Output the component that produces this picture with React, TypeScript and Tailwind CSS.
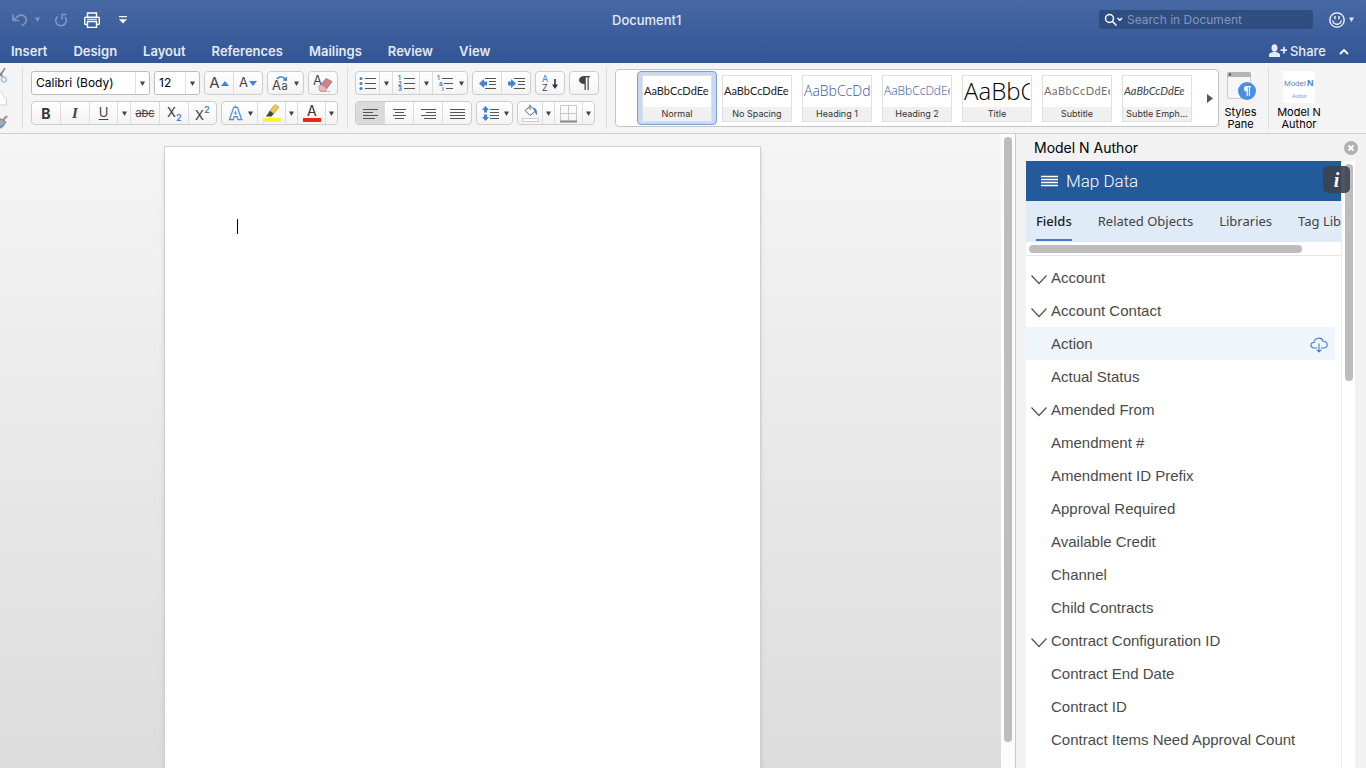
import { ReactNode } from 'react';

const fields = [
    { name: 'Account', group: true },
    { name: 'Account Contact', group: true },
    { name: 'Action', active: true },
    { name: 'Actual Status' },
    { name: 'Amended From', group: true },
    { name: 'Amendment #' },
    { name: 'Amendment ID Prefix' },
    { name: 'Approval Required' },
    { name: 'Available Credit' },
    { name: 'Channel' },
    { name: 'Child Contracts' },
    { name: 'Contract Configuration ID', group: true },
    { name: 'Contract End Date' },
    { name: 'Contract ID' },
    { name: 'Contract Items Need Approval Count' },
    { name: 'Contract Name' },
];

const styles = [
    { name: 'Normal', sample: "font-['Lato',sans-serif] text-[11px] text-[#222]", selected: true },
    { name: 'No Spacing', sample: "font-['Lato',sans-serif] text-[11px] text-[#222]" },
    { name: 'Heading 1', sample: "font-['Open_Sans',sans-serif] text-[14px] font-light text-[#2f5597]" },
    { name: 'Heading 2', sample: "font-['Open_Sans',sans-serif] text-[12px] font-light text-[#2f5597]" },
    { name: 'Title', sample: "font-['Open_Sans',sans-serif] text-[24px] font-light text-black" },
    { name: 'Subtitle', sample: "font-['Lato',sans-serif] text-[11px] tracking-wider text-[#707070]" },
    { name: 'Subtle Emph...', sample: "font-['Lato',sans-serif] text-[11px] text-[#404040] italic" },
];

const menuTabs = ['Insert', 'Design', 'Layout', 'References', 'Mailings', 'Review', 'View'];

const Caret = () => (
    <svg width="5" height="5" viewBox="0 0 5 5" className="shrink-0" fill="currentColor">
        <path d="M0 0.5h5L2.5 5z" />
    </svg>
);

const Group = ({ children }: { children: ReactNode }) => (
    <div className="flex h-6 shrink-0 overflow-hidden rounded-[4px] border border-[#cdcdcd] bg-linear-to-b from-white to-[#f3f3f3] text-[#444]">
        {children}
    </div>
);

const Tool = ({ label, className, children }: { label: string; className: string; children: ReactNode }) => (
    <button
        type="button"
        aria-label={label}
        className={`flex h-full shrink-0 items-center justify-center border-[#dcdcdc] not-last:border-r ${className}`}
    >
        {children}
    </button>
);

const Lines = ({ rows, x = 0 }: { rows: number[][]; x?: number }) => (
    <g stroke="#555" strokeWidth="1">
        {rows.map(([start, end], i) => (
            <path key={i} d={`M${start + x} ${i * 3 + 3.5}H${end + x}`} />
        ))}
    </g>
);

const AlignIcon = ({ rows }: { rows: number[][] }) => (
    <svg width="15" height="15" viewBox="0 0 15 15">
        <Lines rows={rows} />
    </svg>
);

const Divider = () => <div className="-mt-1 h-[62px] w-px shrink-0 bg-[#dcdcdc]" />;

const Header = () => (
    <header className="flex h-[63px] shrink-0 flex-col bg-linear-to-b from-[#4768a4] to-[#325594] text-[#e4eaf4]">
        <div className="grid h-[39px] grid-cols-[612fr_487fr_267px] items-center">
            <div className="flex items-center pl-3">
                <button type="button" aria-label="Undo" className="text-[#7f98c3]">
                    <svg width="16" height="14" viewBox="0 0 16 14" fill="none" stroke="currentColor" strokeWidth="1.6">
                        <path d="M1.500 7L6 3.200C10 .8 14.500 3 14.300 7c-.2 2.500-2 4.500-4.800 5.500M1 1.500v6h6" />
                    </svg>
                </button>
                <button type="button" aria-label="Undo list" className="ml-[7px] text-[#7f98c3]"><Caret /></button>
                <button type="button" aria-label="Redo" className="ml-[14px] text-[#7f98c3]">
                    <svg width="14" height="14" viewBox="0 0 14 14" fill="none" stroke="currentColor" strokeWidth="1.6">
                        <path d="M3.500 3.500A5.300 5.300 0 1 0 11 4M7.500 1.500H12.500M8 1.500v5" />
                    </svg>
                </button>
                <button type="button" aria-label="Print" className="ml-4">
                    <svg width="16" height="16" viewBox="0 0 16 16" fill="none" stroke="#fff" strokeWidth="1.400">
                        <path d="M3.500 5V1h9v4M3.500 12.500H1.700a1 1 0 0 1-1-1V6.200a1 1 0 0 1 1-1h12.600a1 1 0 0 1 1 1v5.300a1 1 0 0 1-1 1h-1.800M3.500 9.500h9v6h-9z" />
                        <path d="M3 7.300h10" strokeWidth="1" />
                    </svg>
                </button>
                <button type="button" aria-label="Customize toolbar" className="ml-[19px]">
                    <svg width="8" height="8" viewBox="0 0 8 8" fill="#fff">
                        <path d="M0 0h8v1.200H0zM0 3.200h8L4 7.500z" />
                    </svg>
                </button>
            </div>
            <h1 className="pt-0.5 text-[13px] font-medium">Document1</h1>
            <div className="flex items-center">
                <label className="flex h-[19px] w-[214px] items-center rounded-[3px] bg-[#304d80] pl-[5px]">
                    <svg width="19" height="14" viewBox="0 0 19 14" fill="none" stroke="#fff" strokeWidth="1.500">
                        <circle cx="5.500" cy="5.500" r="4" />
                        <path d="M8.500 8.500l4 4M13.500 5l2.300 2.200L18 5" />
                    </svg>
                    <input
                        type="text"
                        aria-label="Search in Document"
                        placeholder="Search in Document"
                        className="ml-1 w-44 bg-transparent text-[12px] leading-4 outline-none placeholder:text-[#8197bf]"
                    />
                </label>
                <button type="button" aria-label="Feedback" className="ml-4 flex items-center gap-1">
                    <svg width="16" height="16" viewBox="0 0 16 16" fill="none" stroke="#fff" strokeWidth="1.300">
                        <circle cx="8" cy="8" r="7.200" />
                        <path d="M6 4v3.200M10 4v3.200M3.800 8.500c.7 5 7.700 5 8.400 0" />
                    </svg>
                    <Caret />
                </button>
            </div>
        </div>
        <div className="flex h-6 items-center">
            <nav className="flex gap-[26px] pl-[11px]">
                {menuTabs.map((tab) => (
                    <button key={tab} type="button" className="text-[13px] leading-5 font-semibold">{tab}</button>
                ))}
            </nav>
            <button type="button" className="ml-auto flex items-center gap-[3px] text-[13px] leading-5 font-medium">
                <svg width="18" height="14" viewBox="0 0 18 14" fill="currentColor">
                    <ellipse cx="5.500" cy="4" rx="3" ry="3.700" />
                    <path d="M0 13V10.500C.5 8.800 3 8.500 4 8h3c1 .5 3.500.8 4 2.500V13zM11.500 5.200H14V2.700h1.800v2.500H18v1.800h-2.200v2.500H14V7h-2.500z" />
                </svg>
                Share
            </button>
            <button type="button" aria-label="Collapse ribbon" className="mr-[17px] ml-[13px]">
                <svg width="10" height="7" viewBox="0 0 10 7" fill="none" stroke="#fff" strokeWidth="1.800">
                    <path d="M1 6l4-4 4 4" />
                </svg>
            </button>
        </div>
    </header>
);

const FontGroup = () => (
    <div className="flex flex-col gap-[6px] pr-[9px] pl-2">
        <div className="flex gap-1">
            <div className="relative flex">
                <select aria-label="Font" className="h-6 w-[119px] appearance-none rounded-[3px] border border-[#bdbdbd] bg-white pl-1 text-[12px] text-black">
                    <option>Calibri (Body)</option>
                </select>
                <span className="pointer-events-none absolute inset-y-px right-px flex w-[14px] items-center justify-center border-l border-[#e0e0e0] text-[#444]"><Caret /></span>
            </div>
            <div className="relative flex">
                <select aria-label="Font size" className="h-6 w-[46px] appearance-none rounded-[3px] border border-[#bdbdbd] bg-white pl-1 text-[12px] text-black">
                    <option>12</option>
                </select>
                <span className="pointer-events-none absolute inset-y-px right-px flex w-[14px] items-center justify-center border-l border-[#e0e0e0] text-[#444]"><Caret /></span>
            </div>
            <Group>
                <Tool label="Increase font size" className="w-[29px] gap-px text-[15px]">
                    A
                    <svg width="8" height="5" viewBox="0 0 8 5" fill="#3f83d6"><path d="M0 5L4 0l4 5z" /></svg>
                </Tool>
                <Tool label="Decrease font size" className="w-7 gap-px text-[13px]">
                    A
                    <svg width="8" height="5" viewBox="0 0 8 5" fill="#3f83d6"><path d="M0 0h8L4 5z" /></svg>
                </Tool>
            </Group>
            <Group>
                <Tool label="Change case" className="w-[35px] gap-[5px]">
                    <svg width="17" height="17" viewBox="0 0 17 17">
                        <text x="0" y="15" fontSize="13" fill="#444">A</text>
                        <text x="9.500" y="15" fontSize="11" fill="#444">a</text>
                        <path d="M5 4c2-3 6-3 8 0" fill="none" stroke="#3f83d6" strokeWidth="1.700" />
                        <path d="M10.500 5.500l4.500.5V1.500z" fill="#3f83d6" />
                    </svg>
                    <Caret />
                </Tool>
            </Group>
            <Group>
                <Tool label="Clear formatting" className="w-7">
                    <svg width="22" height="20" viewBox="0 0 22 20">
                        <text x="1" y="12" fontSize="13" fill="#444">A</text>
                        <path d="M8 18.500h10" stroke="#bbb" />
                        <path d="M7 13.500L14 5.500l6 3-7 9.500-5.500-.5z" fill="#cf8290" stroke="#a8636f" strokeWidth=".8" />
                        <path d="M7 13.500l1.500-1.700 6 3.500L13 18l-5.500-.5z" fill="#e8b6bd" />
                    </svg>
                </Tool>
            </Group>
        </div>
        <div className="flex gap-1">
            <Group>
                <Tool label="Bold" className="w-[29px] text-[14px] font-bold text-[#333]">B</Tool>
                <Tool label="Italic" className="w-[29px] font-['Liberation_Serif',serif] text-[15px] font-bold italic">I</Tool>
                <Tool label="Underline" className="w-7 text-[13px] underline underline-offset-2">U</Tool>
                <Tool label="Underline style" className="w-[13px]"><Caret /></Tool>
                <Tool label="Strikethrough" className="w-[29px] text-[11px] line-through">abc</Tool>
                <Tool label="Subscript" className="w-[29px]">
                    <svg width="17" height="17" viewBox="0 0 17 17">
                        <text x="1" y="12" fontSize="13" fill="#333">X</text>
                        <text x="10" y="16" fontSize="9" fontWeight="600" fill="#3f83d6">2</text>
                    </svg>
                </Tool>
                <Tool label="Superscript" className="w-[27px]">
                    <svg width="17" height="17" viewBox="0 0 17 17">
                        <text x="1" y="15" fontSize="13" fill="#333">X</text>
                        <text x="10" y="8" fontSize="9" fontWeight="600" fill="#3f83d6">2</text>
                    </svg>
                </Tool>
            </Group>
            <Group>
                <Tool label="Text effects" className="w-9 gap-[5px]">
                    <svg width="16" height="17" viewBox="0 0 16 17">
                        <text x="3" y="14" fontSize="15" fontWeight="600" fill="#fff" stroke="#4a8adb" strokeWidth="2.600" paintOrder="stroke">A</text>
                    </svg>
                    <Caret />
                </Tool>
                <Tool label="Highlight" className="w-7">
                    <svg width="20" height="20" viewBox="0 0 20 20">
                        <rect x="1" y="15" width="18" height="4" fill="#fbf235" />
                        <path d="M4 13.500L8 7.500l4 3-2.500 3z" fill="#444" />
                        <path d="M8 7.500L13 1.500l4 2.500-5 6.500z" fill="#ecc85b" stroke="#b99a45" strokeWidth=".7" />
                    </svg>
                </Tool>
                <Tool label="Highlight color" className="w-3"><Caret /></Tool>
                <Tool label="Font color" className="w-7">
                    <svg width="20" height="20" viewBox="0 0 20 20">
                        <text x="5" y="13" fontSize="14" fill="#333">A</text>
                        <rect x="1" y="15" width="18" height="4" fill="#e8261a" />
                    </svg>
                </Tool>
                <Tool label="Font color list" className="w-[11px]"><Caret /></Tool>
            </Group>
        </div>
    </div>
);

const ParagraphGroup = () => (
    <div className="flex flex-col gap-[6px] px-[7px]">
        <div className="flex gap-1">
            <Group>
                <Tool label="Bullets" className="w-6">
                    <svg width="17" height="17" viewBox="0 0 17 17">
                        <g fill="#3f83d6"><circle cx="2" cy="3.500" r="1.500" /><circle cx="2" cy="8.500" r="1.500" /><circle cx="2" cy="13.500" r="1.500" /></g>
                        <path d="M6 3.500h11M6 8.500h11M6 13.500h11" stroke="#555" />
                    </svg>
                </Tool>
                <Tool label="Bullet list" className="w-[13px]"><Caret /></Tool>
                <Tool label="Numbering" className="w-[27px]">
                    <svg width="17" height="17" viewBox="0 0 17 17">
                        <g fill="#3f83d6" fontSize="6" fontWeight="700"><text x="0" y="5">1</text><text x="0" y="11">2</text><text x="0" y="16">3</text></g>
                        <path d="M6 3.500h11M6 8.500h11M6 13.500h11" stroke="#555" />
                    </svg>
                </Tool>
                <Tool label="Number list" className="w-[13px]"><Caret /></Tool>
                <Tool label="Multilevel list" className="w-[34px] gap-[5px]">
                    <svg width="18" height="17" viewBox="0 0 18 17">
                        <g fill="#3f83d6" fontSize="6" fontWeight="700"><text x="1" y="5">1</text><text x="3" y="11">a</text><text x="6" y="16">i</text></g>
                        <path d="M6 3.500h11M8 8.500h9M10 13.500h7" stroke="#555" />
                    </svg>
                    <Caret />
                </Tool>
            </Group>
            <Group>
                <Tool label="Decrease indent" className="w-[29px]">
                    <svg width="18" height="15" viewBox="0 0 18 15">
                        <path d="M1 7.500L6 3v2.500h3v4H6V12z" fill="#3f83d6" />
                        <path d="M7 2.500h11M11 5.500h7M11 8.500h7M7 12.500h11" stroke="#555" />
                    </svg>
                </Tool>
                <Tool label="Increase indent" className="w-7">
                    <svg width="18" height="15" viewBox="0 0 18 15">
                        <path d="M9 7.500L4 3v2.500H1v4h3V12z" fill="#3f83d6" />
                        <path d="M7 2.500h11M11 5.500h7M11 8.500h7M7 12.500h11" stroke="#555" />
                    </svg>
                </Tool>
            </Group>
            <Group>
                <Tool label="Sort" className="w-7">
                    <svg width="18" height="20" viewBox="0 0 18 20">
                        <text x="1" y="9" fontSize="9" fill="#3f83d6">A</text>
                        <text x="1" y="18" fontSize="9" fill="#444">Z</text>
                        <path d="M14 6v8" stroke="#333" strokeWidth="1.600" />
                        <path d="M11 11.500h6L14 16z" fill="#333" />
                    </svg>
                </Tool>
            </Group>
            <Group>
                <Tool label="Show marks" className="w-7">
                    <svg width="13" height="14" viewBox="0 0 13 14">
                        <path d="M6.500 0H12v1.200h-1.300V14H9.500V1.200H7.800V14H6.500V8C-.8 8-.8 0 6.500 0z" fill="#444" />
                    </svg>
                </Tool>
            </Group>
        </div>
        <div className="flex gap-1">
            <Group>
                <Tool label="Align left" className="w-[29px] bg-[#dadada]"><AlignIcon rows={[[0, 15], [0, 10], [0, 15], [0, 12]]} /></Tool>
                <Tool label="Center" className="w-[29px]"><AlignIcon rows={[[1, 14], [3, 12], [1, 14], [3, 12]]} /></Tool>
                <Tool label="Align right" className="w-[29px]"><AlignIcon rows={[[0, 15], [5, 15], [0, 15], [3, 15]]} /></Tool>
                <Tool label="Justify" className="w-7"><AlignIcon rows={[[0, 15], [0, 15], [0, 15], [0, 15]]} /></Tool>
            </Group>
            <Group>
                <Tool label="Line spacing" className="w-[35px] gap-1">
                    <svg width="19" height="15" viewBox="0 0 19 15">
                        <path d="M4.500 0L8 4H6v2.500H3V4H1zM4.500 15L8 11H6V8.500H3V11H1z" fill="#3f83d6" />
                        <Lines rows={[[9, 18], [9, 18], [9, 18], [9, 18]]} />
                    </svg>
                    <Caret />
                </Tool>
            </Group>
            <Group>
                <Tool label="Shading" className="w-[25px]">
                    <svg width="19" height="20" viewBox="0 0 19 20">
                        <rect x="1.500" y="15.500" width="16" height="3" fill="#fff" stroke="#ccc" />
                        <path d="M4 7.500L9.500 3l5 5L9 12.500z" fill="#fff" stroke="#666" />
                        <path d="M9 7V1.500" stroke="#666" />
                        <path d="M12 4.500c3 .5 4.500 3 4 7.500-2-1-2-3-2.500-4.500z" fill="#3f83d6" />
                    </svg>
                </Tool>
                <Tool label="Shading color" className="w-3"><Caret /></Tool>
                <Tool label="Borders" className="w-7">
                    <svg width="19" height="19" viewBox="0 0 19 19" fill="none" stroke="#c8c8c8">
                        <path d="M1.500 1.500h16v16h-16zM9.500 1.500v16M1.500 9.500h16" />
                        <path d="M1 17.500h17" stroke="#888" strokeWidth="2" />
                    </svg>
                </Tool>
                <Tool label="Border list" className="w-[11px]"><Caret /></Tool>
            </Group>
        </div>
    </div>
);

const StyleGallery = () => (
    <div className="-mt-0.5 ml-2 flex h-[58px] shrink-0 items-center rounded-[4px] border border-[#c4c4c4] bg-white pl-[21px]">
        {styles.map((style) => (
            <button
                key={style.name}
                type="button"
                className={`flex h-[54px] w-20 items-center justify-center rounded-[4px] border ${style.selected ? 'border-[#7d9fd3] bg-[#c9d8ee]' : 'border-transparent'}`}
            >
                <span className="flex h-[47px] w-[70px] flex-col border border-[#e0e0e0] bg-white">
                    <span className="flex h-[31px] items-center px-px">
                        <span className={`overflow-hidden leading-7 whitespace-nowrap ${style.sample}`}>AaBbCcDdEe</span>
                    </span>
                    <span className="h-[14px] bg-[#f0f0f0] text-center text-[9px] leading-[14px] whitespace-nowrap text-[#333]">{style.name}</span>
                </span>
            </button>
        ))}
        <button type="button" aria-label="More styles" className="flex w-[21px] justify-center pl-1 text-[#555]">
            <svg width="6" height="9" viewBox="0 0 6 9" fill="currentColor"><path d="M0 0l6 4.500L0 9z" /></svg>
        </button>
    </div>
);

const Ribbon = () => (
    <div className="flex h-[71px] shrink-0 overflow-hidden border-b border-[#cfcfcf] bg-[#f4f4f4] pt-2 text-black">
        <div className="-mt-2 flex w-[22px] shrink-0 flex-col items-start gap-2 pt-1">
            <button type="button" aria-label="Cut">
                <svg width="8" height="16" viewBox="0 0 8 16" fill="none">
                    <path d="M5 1L0 9M0 6l3 4" stroke="#888" strokeWidth="1.600" />
                    <circle cx="3.800" cy="12.500" r="2.500" stroke="#9fc3ea" strokeWidth="1.400" />
                </svg>
            </button>
            <button type="button" aria-label="Copy">
                <svg width="8" height="16" viewBox="0 0 8 16" fill="#fff" stroke="#d0d0d0">
                    <path d="M-4 .5h5l2 2v3h1l2.500 2.500v6H-2" />
                </svg>
            </button>
            <button type="button" aria-label="Format painter">
                <svg width="8" height="16" viewBox="0 0 8 16" fill="none">
                    <path d="M7 1L3 5" stroke="#999" strokeWidth="2.400" />
                    <path d="M-1 3l7 4-3 4-4 1z" fill="#aaa" stroke="#777" />
                    <path d="M0 13l4-3" stroke="#5a94d8" strokeWidth="1.600" />
                </svg>
            </button>
        </div>
        <Divider />
        <FontGroup />
        <Divider />
        <ParagraphGroup />
        <Divider />
        <StyleGallery />
        <button type="button" className="flex w-[43px] shrink-0 flex-col items-center text-[11px] leading-3">
            <svg width="30" height="32" viewBox="0 0 30 32" className="mb-[3px]">
                <rect x="1.500" y="1.500" width="23" height="26" rx="1.500" fill="#f7f7f7" stroke="#ccc" />
                <path d="M1 3a2 2 0 0 1 2-2h20a2 2 0 0 1 2 2v3H1z" fill="#b4b4b4" />
                <circle cx="4" cy="3.500" r="1.200" fill="#555" />
                <circle cx="21" cy="20" r="9" fill="#4a8fe2" />
                <path d="M20.500 15H25v1.200h-1V25h-1.200v-8.800h-1V25h-1.200v-4.500c-3.500 0-3.500-5.500-.1-5.500z" fill="#fff" />
            </svg>
            Styles<br />Pane
        </button>
        <div className="ml-1.5"><Divider /></div>
        <button type="button" className="flex w-[60px] shrink-0 flex-col items-center text-[11px] leading-3">
            <svg width="32" height="32" viewBox="0 0 32 32" className="mb-[3px]" fontFamily="'Liberation Sans', sans-serif">
                <rect width="32" height="32" fill="#fff" />
                <text x="1" y="15" fontSize="8" fill="#5f7fb5">Model</text>
                <text x="24" y="15" fontSize="9" fontWeight="700" fill="#3f83d6">N</text>
                <text x="9" y="27" fontSize="5" fill="#6d9edb">Author</text>
            </svg>
            Model N<br />Author
        </button>
    </div>
);

const DocumentArea = () => (
    <main className="flex min-w-0 flex-1">
        <div className="flex flex-1 bg-linear-to-b from-[#f5f5f5] to-[#dcdcdc] pt-3 pl-41">
            <article className="w-[597px] border border-b-0 border-[#cfcfcf] bg-white px-18 pt-18 shadow-md">
                <div className="h-[15px] w-px bg-black" />
            </article>
        </div>
        <div className="w-[15px] border-r border-[#c9c9c9] bg-[#fcfcfc] px-[3px] pt-[3px]">
            <div className="h-[605px] w-2 rounded-full bg-[#bdbdbd]" />
        </div>
    </main>
);

const TaskPane = () => (
    <aside className="flex w-[350px] shrink-0 flex-col bg-[#f2f2f2] pr-[11px] pl-[10px]">
        <div className="-mr-[3px] flex h-[27px] shrink-0 items-center justify-between pl-2">
            <h2 className="text-[14px] text-black">Model N Author</h2>
            <button type="button" aria-label="Close pane">
                <svg width="14" height="14" viewBox="0 0 14 14">
                    <circle cx="7" cy="7" r="7" fill="#b0b0b0" />
                    <path d="M4.500 4.500l5 5M9.500 4.500l-5 5" stroke="#fff" strokeWidth="1.800" />
                </svg>
            </button>
        </div>
        <div className="relative flex min-h-0 flex-1 bg-white">
            <div className="flex w-[316px] flex-col border-r border-[#ebebeb]">
                <div className="flex h-10 shrink-0 items-center gap-2 bg-[#225a9b] pl-[15px] text-white">
                    <button type="button" aria-label="Menu">
                        <svg width="17" height="12" viewBox="0 0 17 12" stroke="#fff" strokeWidth="1.300">
                            <path d="M0 1.500h17M0 4.500h17M0 7.500h17M0 10.500h17" />
                        </svg>
                    </button>
                    <h3 className="pt-px font-['Roboto',sans-serif] text-[17px] font-light">Map Data</h3>
                </div>
                <div className="flex h-[41px] shrink-0 gap-[26px] overflow-hidden bg-[#dfebf7] pl-[10px] font-['Noto_Sans',sans-serif] text-[13px] whitespace-nowrap text-[#444]">
                    <button type="button" className="h-10 border-b-2 border-[#3a7bd0] pt-[3px] font-medium text-[#222]">Fields</button>
                    <button type="button" className="h-10 pt-px">Related Objects</button>
                    <button type="button" className="h-10 pt-px">Libraries</button>
                    <button type="button" className="h-10 pt-px">Tag Library</button>
                </div>
                <div className="h-[14px] shrink-0 border-b border-[#e6e6e6] px-[3px] pt-[3px]">
                    <div className="h-2 w-[273px] rounded-full bg-[#bdbdbd]" />
                </div>
                <ul className="min-h-0 flex-1 overflow-hidden pt-[5px] pr-[6px]">
                    {fields.map((field) => (
                        <li key={field.name}>
                            <button
                                type="button"
                                className={`flex h-[33px] w-full items-center gap-1 pt-px pl-[5px] text-left font-['Liberation_Sans',Arial,sans-serif] text-[15px] text-[#4a4a4a] ${field.active ? 'bg-[#f0f5fb]' : ''}`}
                            >
                                <span className="w-4">
                                    {field.group && (
                                        <svg width="16" height="16" viewBox="0 0 16 16" fill="none" stroke="#555" strokeWidth="1.200">
                                            <path d="M0.500 5.500L8 13.500l7.500-8" />
                                        </svg>
                                    )}
                                </span>
                                {field.name}
                                {field.active && (
                                    <svg width="18" height="16" viewBox="0 0 18 16" className="mt-0.5 mr-[7px] ml-auto" fill="none" stroke="#3f7fcf" strokeWidth="1.100">
                                        <path d="M7 11H4.200C-.3 10.500.2 5.500 4 5.500 4.500.5 11.500-.5 13 4.200c5 0 5.500 6 1.300 6.800H11M9 6.500V15M6.700 12.700L9 15l2.300-2.300" />
                                    </svg>
                                )}
                            </button>
                        </li>
                    ))}
                </ul>
            </div>
            <div className="pt-[3px] pl-[3px]">
                <div className="h-[217px] w-2 rounded-full bg-[#bdbdbd]" />
            </div>
            <button
                type="button"
                aria-label="Info"
                className="absolute top-[5px] right-[5px] flex size-[27px] items-center justify-center rounded-[5px] bg-[#3c434d]/90 font-['Liberation_Serif',serif] text-[20px] font-bold text-white italic"
            >
                i
            </button>
        </div>
    </aside>
);

const App: React.FC = () => {
    return (
        <div className="flex h-screen flex-col overflow-hidden bg-[#f4f4f4] font-['Inter',sans-serif]">
            <Header />
            <Ribbon />
            <div className="flex min-h-0 flex-1">
                <DocumentArea />
                <TaskPane />
            </div>
        </div>
    );
};

export default App;
